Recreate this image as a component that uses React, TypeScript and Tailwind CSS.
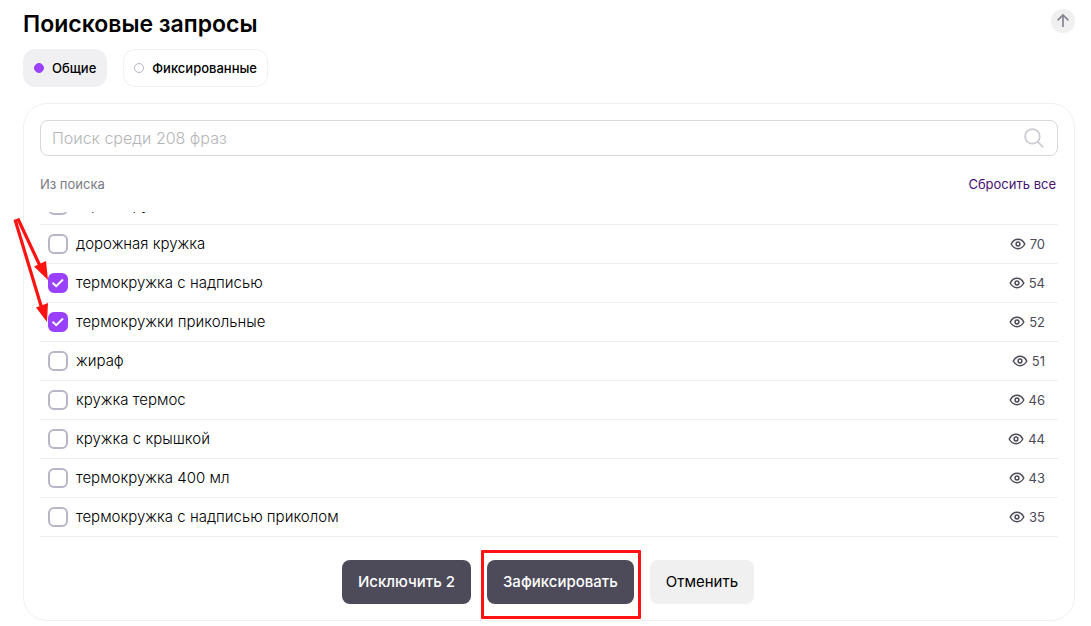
import { useState } from "react";

type Phrase = { text: string; views: number };

const phrases: Phrase[] = [
  { text: "термо кружка", views: 74 },
  { text: "дорожная кружка", views: 70 },
  { text: "термокружка с надписью", views: 54 },
  { text: "термокружки прикольные", views: 52 },
  { text: "жираф", views: 51 },
  { text: "кружка термос", views: 46 },
  { text: "кружка с крышкой", views: 44 },
  { text: "термокружка 400 мл", views: 43 },
  { text: "термокружка с надписью приколом", views: 35 },
];

function EyeIcon() {
  return (
    <svg viewBox="0 0 16 12" className="h-3 w-4 shrink-0" fill="none" stroke="#4d4b59" strokeWidth="1.5" aria-hidden="true">
      <path d="M1.2 6C2.8 3 5.2 1.3 8 1.3S13.200 3 14.800 6C13.200 9 10.800 10.700 8 10.700S2.800 9 1.200 6Z" strokeLinejoin="round" />
      <circle cx="8" cy="6" r="1.900" />
    </svg>
  );
}

function SearchIcon() {
  return (
    <svg viewBox="0 0 20 20" className="size-5 shrink-0" fill="none" stroke="#cdccd4" strokeWidth="1.800" aria-hidden="true">
      <circle cx="8.400" cy="8.400" r="7.300" />
      <path d="M13.600 13.600 19.300 19.300" />
    </svg>
  );
}

function PhraseRow({ phrase, checked, onToggle }: { phrase: Phrase; checked: boolean; onToggle: () => void }) {
  return (
    <li className="flex h-[39px] shrink-0 items-center justify-between border-b border-[#eeeeef] pr-[13px] pl-2">
      <label className="flex items-center gap-2 text-[15px] leading-5 font-light text-black">
        <span className="grid size-5 place-items-center">
          <input
            type="checkbox"
            checked={checked}
            onChange={onToggle}
            className="col-start-1 row-start-1 size-5 appearance-none rounded-md border-2 border-[#b8b5c9] bg-white checked:border-[#9a41fe] checked:bg-[#9a41fe]"
          />
          {checked && (
            <svg viewBox="0 0 20 20" className="pointer-events-none col-start-1 row-start-1 size-5" fill="none" stroke="#fff" strokeWidth="2" aria-hidden="true">
              <path d="M4.500 9.800 8.200 13.200 15 6.500" />
            </svg>
          )}
        </span>
        {phrase.text}
      </label>
      <span className="flex items-center gap-1 text-[13px] leading-5 text-[#4d4b59]">
        <EyeIcon />
        {phrase.views}
      </span>
    </li>
  );
}

export default function App() {
  const [tab, setTab] = useState(0);
  const [selected, setSelected] = useState<number[]>([2, 3]);
  const toggle = (i: number) =>
    setSelected((s) => (s.includes(i) ? s.filter((n) => n !== i) : [...s, i]));

  return (
    <main className="relative min-h-screen bg-white pt-2 pr-4 pb-[5px] pl-[23px] font-['Inter','Noto_Sans',sans-serif]">
      <header className="flex h-[41px] items-start justify-between">
        <h1 className="text-[23px] leading-8 font-semibold text-black">Поисковые запросы</h1>
        <button type="button" aria-label="Наверх" className="mt-px flex size-6 items-center justify-center rounded-full bg-[#f0f0f0]">
          <svg viewBox="0 0 24 24" className="size-6" fill="none" stroke="#868491" strokeWidth="1.700" aria-hidden="true">
            <path d="M12 18V6.200M6.600 11.400 12 6l5.400 5.400" />
          </svg>
        </button>
      </header>

      <nav className="flex gap-4">
        {["Общие", "Фиксированные"].map((name, i) => (
          <button
            key={name}
            type="button"
            onClick={() => setTab(i)}
            className={
              "flex h-[38px] items-center gap-2 rounded-xl border px-[10px] text-[13px] leading-5 font-medium text-black " +
              (tab === i ? "border-[#f0f0f3] bg-[#f0f0f3]" : "border-[#f0f0f1] bg-white")
            }
          >
            <span
              className={
                "size-[10px] rounded-full border " +
                (tab === i ? "border-[#9a41fe] bg-[#9a41fe]" : "border-[#b8b5c9] bg-white")
              }
            />
            {name}
          </button>
        ))}
      </nav>

      <section className="mt-4 rounded-3xl border border-[#f0f0f0] p-4">
        <label className="flex h-9 items-center rounded-lg border border-[#d8d8da] pr-[13px] pl-[11px]">
          <input
            type="text"
            aria-label="Поиск"
            placeholder="Поиск среди 208 фраз"
            className="min-w-0 flex-1 bg-transparent text-base leading-5 font-light text-black outline-none placeholder:text-[#b5b5b9]"
          />
          <SearchIcon />
        </label>

        <div className="flex h-14 items-center justify-between pr-0.5 text-[13px] leading-5">
          <span className="text-[#7a7983]">Из поиска</span>
          <button type="button" onClick={() => setSelected([])} className="text-[#481173]">
            Сбросить все
          </button>
        </div>

        <ul className="flex h-[325px] flex-col justify-end overflow-hidden">
          {phrases.map((p, i) => (
            <PhraseRow key={p.text} phrase={p} checked={selected.includes(i)} onToggle={() => toggle(i)} />
          ))}
        </ul>

        <div className="mt-[23px] flex justify-center gap-4 pr-0.5 text-[15px] leading-5 font-medium">
          <button type="button" className="h-11 rounded-lg bg-[#4d4b59] px-4 text-white">
            Исключить {selected.length}
          </button>
          <div className="relative">
            <button type="button" className="h-11 rounded-lg bg-[#4d4b59] px-4 text-white">
              Зафиксировать
            </button>
            <span className="pointer-events-none absolute -top-[10px] -right-[7px] -bottom-[15px] -left-[6px] rounded-[1px] border-[3px] border-[#fe1212]" />
          </div>
          <button type="button" className="h-11 rounded-lg bg-[#f0f0f0] px-4 font-normal text-black">
            Отменить
          </button>
        </div>
      </section>

      <svg viewBox="0 0 40 110" className="pointer-events-none absolute top-[214px] left-[10px] h-[110px] w-10" fill="#fe1212" stroke="#fe1212" aria-hidden="true">
        <path d="M7.800 4.500 31 54M5 5.500 32 95" fill="none" strokeWidth="3.200" />
        <path d="M38 66 24 52.500 36 47ZM37 108 26 93.500 38 89Z" stroke="none" />
      </svg>
    </main>
  );
}
